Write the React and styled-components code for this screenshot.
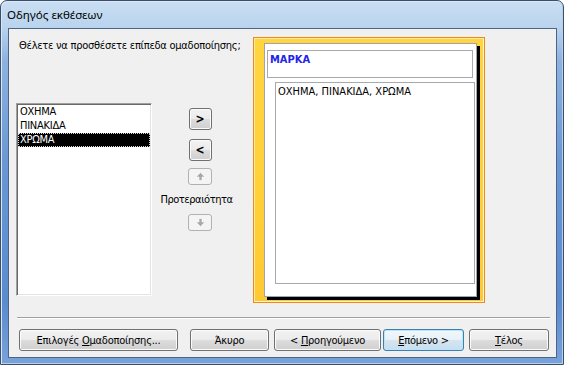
import React from "react";
import styled, { createGlobalStyle, css } from "styled-components";

const GlobalStyle = createGlobalStyle`
  html, body {
    margin: 0;
    padding: 0;
    background: #ffffff;
  }
  * {
    box-sizing: border-box;
  }
`;

const UI_FONT = `"DejaVu Sans Condensed", "Liberation Sans", sans-serif`;

const Window = styled.div`
  width: 564px;
  height: 365px;
  border: 1px solid #3a4e6e;
  border-radius: 7px 7px 0 0;
  background: linear-gradient(
    180deg,
    #c9def2 0px,
    #bad4ee 26px,
    #8db2df 60px,
    #6a98d5 160px,
    #5a8bcd 300px,
    #7aa3db 365px
  );
  box-shadow: inset 1px 1px 0 #dbe9f7, inset -1px -1px 0 #b9cfe9;
  display: flex;
  flex-direction: column;
  overflow: hidden;
`;

const TitleBar = styled.div`
  height: 27px;
  padding-left: 6px;
  display: flex;
  align-items: center;
  font-family: "Noto Sans", "Open Sans", sans-serif;
  font-size: 11.6px;
  color: #000;
`;

const Client = styled.div`
  width: 549px;
  height: 330px;
  margin: 0 6px 6px 7px;
  border: 1px solid #4d6485;
  background: #f0f0f0;
  display: flex;
  flex-direction: column;
  font-family: ${UI_FONT};
  font-size: 11px;
  letter-spacing: -0.25px;
  color: #000;
`;

const Body = styled.div`
  flex: 1;
  display: flex;
  padding-top: 8px;
`;

const LeftPane = styled.div`
  width: 244px;
  display: flex;
  flex-direction: column;
`;

const Prompt = styled.div`
  margin: 2px 0 0 10px;
  line-height: 13px;
  white-space: nowrap;
`;

const PickRow = styled.div`
  display: flex;
  margin-top: 51px;
  margin-left: 7px;
`;

const ListBox = styled.div`
  width: 136px;
  height: 193px;
  background: #fff;
  border: 1px solid;
  border-color: #a0a0a0 #ffffff #ffffff #a0a0a0;
  box-shadow: inset 1px 1px 0 #696969, inset -1px -1px 0 #e3e3e3;
  padding: 1px;
`;

const ListItem = styled.div`
  height: 14px;
  line-height: 14px;
  padding-left: 2px;
  white-space: nowrap;
  ${(p) =>
    p.$selected &&
    css`
      background: #000;
      color: #fff;
      outline: 1px dotted #d8d8d8;
      outline-offset: -1px;
    `}
`;

const Controls = styled.div`
  width: 72px;
  margin-left: 12px;
  padding-top: 5px;
  display: flex;
  flex-direction: column;
  align-items: center;
`;

const buttonFace = css`
  border: 1px solid #707070;
  border-radius: 3px;
  background: linear-gradient(
    180deg,
    #f2f2f2 0%,
    #ebebeb 50%,
    #dddddd 51%,
    #cfcfcf 100%
  );
  box-shadow: inset 0 0 0 1px #fbfbfb;
  font-family: ${UI_FONT};
  font-size: 11px;
  letter-spacing: -0.25px;
  color: #000;
  padding: 0;
  display: flex;
  align-items: center;
  justify-content: center;
`;

const MoveButton = styled.button`
  ${buttonFace}
  width: 23px;
  height: 22px;
  margin-top: ${(p) => p.$gap || 0}px;
  font-weight: bold;
  font-size: 12px;
`;

const OrderButton = styled.button`
  ${buttonFace}
  width: 24px;
  height: 17px;
  margin-top: ${(p) => p.$gap || 0}px;
  border-color: #adb2b5;
  background: #f4f4f4;
  box-shadow: none;
`;

const OrderLabel = styled.div`
  margin-top: 8px;
  margin-right: 7px;
  line-height: 13px;
  letter-spacing: -0.45px;
  white-space: nowrap;
`;

const Preview = styled.div`
  width: 232px;
  height: 266px;
  border: 1px solid #ee8a1c;
  background: linear-gradient(180deg, #ffd540 0%, #ffd038 60%, #ffc933 100%);
  box-shadow: inset 1px 1px 0 #ffeaa0, inset -1px -1px 0 #fff3c8;
  padding: 5px 0 0 10px;
`;

const Page = styled.div`
  width: 213px;
  height: 254px;
  background: #fff;
  border: 1px solid #a3a3ab;
  box-shadow: 3px 3px 0 #000;
  padding: 6px 0 0 2px;
  display: flex;
  flex-direction: column;
  letter-spacing: 0;
`;

const GroupHeader = styled.div`
  width: 206px;
  height: 28px;
  border: 1px solid #a8a8b0;
  padding: 2px 0 0 2px;
  line-height: 13px;
  font-weight: bold;
  color: #2323e8;
`;

const Detail = styled.div`
  width: 200px;
  height: 202px;
  margin: 4px 0 0 8px;
  border: 1px solid #a8a8b0;
  padding: 2px 0 0 2px;
  line-height: 13px;
  white-space: nowrap;
`;

const Separator = styled.div`
  height: 2px;
  margin: 0 6px 0 8px;
  border-top: 1px solid #a0a0a0;
  border-bottom: 1px solid #ffffff;
`;

const Footer = styled.div`
  display: flex;
  padding: 10px 0 6px 10px;
`;

const DialogButton = styled.button`
  ${buttonFace}
  width: ${(p) => p.$w}px;
  height: 22px;
  margin-left: ${(p) => p.$gap || 0}px;
  ${(p) =>
    p.$default &&
    css`
      border-color: #3c7fb1;
      background: linear-gradient(
        180deg,
        #f1f8fc 0%,
        #e7f1f8 50%,
        #d6e6f1 51%,
        #c9ddeb 100%
      );
      box-shadow: inset 0 0 0 1px #b8e6fb;
    `}
`;

const Caption = styled.span`
  white-space: pre;
`;

const Key = styled.span`
  text-decoration: underline;
`;

function ArrowIcon({ down }) {
  return (
    <svg width="11" height="9" viewBox="0 0 11 9">
      <g transform={down ? "rotate(180 5.5 4.5)" : undefined}>
        <polygon
          points="5.5,0.5 10,5 7,5 7,8.5 4,8.5 4,5 1,5"
          fill="#a9a9a9"
          stroke="#ffffff"
          strokeWidth="0.6"
          strokeLinejoin="round"
        />
      </g>
    </svg>
  );
}

const fields = ["ΟΧΗΜΑ", "ΠΙΝΑΚΙΔΑ", "ΧΡΩΜΑ"];

export default function App() {
  return (
    <>
      <GlobalStyle />
      <Window>
        <TitleBar>Οδηγός εκθέσεων</TitleBar>
        <Client>
          <Body>
            <LeftPane>
              <Prompt>Θέλετε να προσθέσετε επίπεδα ομαδοποίησης;</Prompt>
              <PickRow>
                <ListBox>
                  {fields.map((f, i) => (
                    <ListItem key={f} $selected={i === 2}>
                      {f}
                    </ListItem>
                  ))}
                </ListBox>
                <Controls>
                  <MoveButton>&gt;</MoveButton>
                  <MoveButton $gap={9}>&lt;</MoveButton>
                  <OrderButton $gap={7} disabled>
                    <ArrowIcon />
                  </OrderButton>
                  <OrderLabel>Προτεραιότητα</OrderLabel>
                  <OrderButton $gap={8} disabled>
                    <ArrowIcon down />
                  </OrderButton>
                </Controls>
              </PickRow>
            </LeftPane>
            <Preview>
              <Page>
                <GroupHeader>ΜΑΡΚΑ</GroupHeader>
                <Detail>ΟΧΗΜΑ, ΠΙΝΑΚΙΔΑ, ΧΡΩΜΑ</Detail>
              </Page>
            </Preview>
          </Body>
          <Separator />
          <Footer>
            <DialogButton $w={159}>
              <Caption>
                Επιλογές <Key>Ο</Key>μαδοποίησης...
              </Caption>
            </DialogButton>
            <DialogButton $w={79} $gap={12}>
              <Caption>Άκυρο</Caption>
            </DialogButton>
            <DialogButton $w={107} $gap={5}>
              <Caption>
                &lt; <Key>Π</Key>ροηγούμενο
              </Caption>
            </DialogButton>
            <DialogButton $w={81} $gap={2} $default>
              <Caption>
                <Key>Ε</Key>πόμενο &gt;
              </Caption>
            </DialogButton>
            <DialogButton $w={80} $gap={5}>
              <Caption>
                <Key>Τ</Key>έλος
              </Caption>
            </DialogButton>
          </Footer>
        </Client>
      </Window>
    </>
  );
}
